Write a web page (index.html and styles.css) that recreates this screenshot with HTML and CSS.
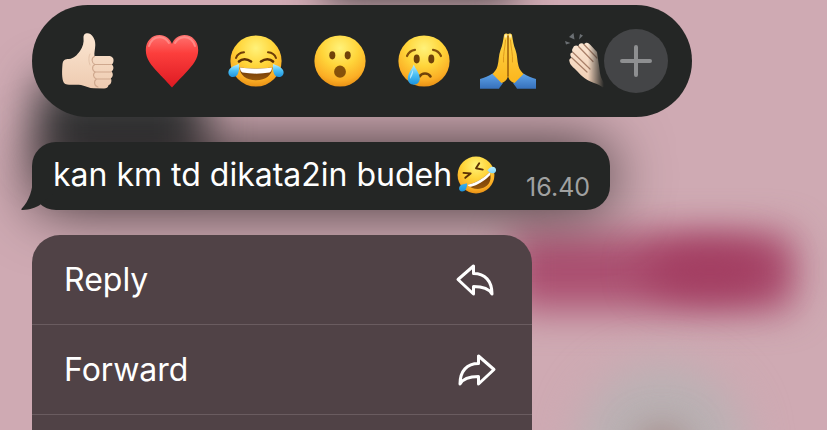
FILE: index.html
```
<!DOCTYPE html>
<html lang="id">
<head>
  <meta charset="UTF-8" />
  <meta name="viewport" content="width=device-width, initial-scale=1.0" />
  <title>Chat</title>
  <link rel="stylesheet" href="styles.css">
</head>
<body>
  <!-- blurred chat behind the menu -->
  <svg class="backdrop" viewBox="0 0 827 430" preserveAspectRatio="xMinYMin slice" aria-hidden="true">
    <defs>
      <filter id="blur" x="-80%" y="-100%" width="260%" height="300%" color-interpolation-filters="sRGB"><feGaussianBlur stdDeviation="22" /></filter>
      <filter id="blurSmall" x="-80%" y="-200%" width="260%" height="500%" color-interpolation-filters="sRGB"><feGaussianBlur stdDeviation="19" /></filter>
    </defs>
    <rect x="325" y="-40" width="190" height="40" fill="#3d3a3b" filter="url(#blurSmall)" />
    <rect x="36" y="76" width="170" height="90" rx="20" fill="#3a3b3c" filter="url(#blur)" />
    <rect x="510" y="234" width="284" height="76" rx="12" fill="#ab4f70" filter="url(#blurSmall)" />
    <ellipse cx="710" cy="270" rx="68" ry="26" fill="#a23c60" filter="url(#blurSmall)" />
    <circle cx="662" cy="448" r="84" fill="#b9b2b4" filter="url(#blur)" />
    <circle cx="662" cy="452" r="24" fill="#a0807c" filter="url(#blurSmall)" />
  </svg>

  <!-- gradients shared by the emoji -->
  <svg class="defs" aria-hidden="true">
    <defs>
      <radialGradient id="face" cx="50%" cy="25%" r="78%">
        <stop offset="0" stop-color="#fff27a" />
        <stop offset=".45" stop-color="#ffd53a" />
        <stop offset=".8" stop-color="#fbae25" />
        <stop offset="1" stop-color="#e48a12" />
      </radialGradient>
      <linearGradient id="tear" x1="0" y1="0" x2="0" y2="1">
        <stop offset="0" stop-color="#b9eeff" />
        <stop offset=".5" stop-color="#4cc0f5" />
        <stop offset="1" stop-color="#1c92dd" />
      </linearGradient>
      <linearGradient id="heart" x1="0" y1="0" x2="0" y2="1">
        <stop offset="0" stop-color="#ff7370" />
        <stop offset=".35" stop-color="#fc3e3c" />
        <stop offset="1" stop-color="#dd1a22" />
      </linearGradient>
      <linearGradient id="skin" x1="0" y1="0" x2="0" y2="1">
        <stop offset="0" stop-color="#fbe6d2" />
        <stop offset="1" stop-color="#eecbb1" />
      </linearGradient>
      <linearGradient id="hands" x1="0" y1="0" x2="0" y2="1">
        <stop offset="0" stop-color="#ffd64b" />
        <stop offset="1" stop-color="#fbb51c" />
      </linearGradient>
      <linearGradient id="sleeve" x1="0" y1="0" x2="0" y2="1">
        <stop offset="0" stop-color="#5fa4ea" />
        <stop offset="1" stop-color="#3670bb" />
      </linearGradient>
      <linearGradient id="mouth" x1="0" y1="0" x2="0" y2="1">
        <stop offset="0" stop-color="#6b3506" />
        <stop offset="1" stop-color="#94560d" />
      </linearGradient>
    </defs>
  </svg>

  <main class="overlay">
    <div class="reactions">
      <div class="emoji-list">
        <button class="emoji" aria-label="Thumbs up">
          <svg viewBox="0 0 56 56">
            <path fill="url(#skin)" d="M2.500 31C3 27 5 26 9 26C14 25.500 17 22 20 18C23 14 24 9 23.500 5C23.400 1.500 25 .3 27.500.3C32 .5 35.500 6 35.300 12C35.200 16 34 20 34.500 23L48 23C52 23 54 25 53.500 28C53.300 30 52.700 31 51.800 31.500C54 33 54 37 51.500 38.500C53.500 40.500 53.200 44 50.800 45.300C52.200 48 51 51.500 48.500 52.300C48 54.500 46.500 55.500 44 55.500L34 55.300C29 55.200 26 53 21 52C15 51 7 53 4 50C1.500 46 2 37 2.500 31Z" />
            <path fill="none" stroke="#cfa88e" stroke-width="1.100" stroke-linecap="round" d="M34.500 23.500C31 25 31.500 30 35 31.500H51.500M35 31.500C31.500 33 32 38 35.500 39H51M35.500 39C32.500 40.500 33 45 36.500 46H50.500M36.500 46C33.500 48 34 53 38 54" />
            <path fill="none" stroke="#e4c3aa" stroke-width="1" stroke-linecap="round" d="M30 21C28 25 29 29 30 32" />
          </svg>
        </button>
        <button class="emoji" aria-label="Love">
          <svg viewBox="0 0 56 56">
            <path fill="url(#heart)" d="M28 54.500C25 51 21 47 14 39.500C7 32 1.800 26 1.800 17C1.800 8 8 2 15.500 2C21.500 2 26 5.500 28 11C30 5.500 34.500 2 40.500 2C48 2 54.200 8 54.200 17C54.200 26 49 32 42 39.500C35 47 31 51 28 54.500Z" />
            <path fill="none" stroke="#ff9a96" stroke-width="2" stroke-linecap="round" opacity=".7" d="M5 13C7 7 11 4 16 4.200C20 4.500 23 6.500 25 10M31 10C33 6.500 36 4.500 40 4.200C45 4 49 7 51 13" />
          </svg>
        </button>
        <button class="emoji" aria-label="Tears of joy">
          <svg viewBox="0 0 56 56">
            <circle cx="28" cy="28" r="25.600" fill="url(#face)" />
            <path fill="none" stroke="#6d3c08" stroke-width="2" stroke-linecap="round" d="M8 25C9 22 12 19.500 16 19.200M48 25C47 22 44 19.500 40 19.200" />
            <path fill="none" stroke="#5d3004" stroke-width="2.600" stroke-linecap="round" d="M11 28.500C14 25.500 19 25.500 23 28.500M33 28.500C37 25.500 42 25.500 45 28.500" />
            <path fill="url(#mouth)" d="M11.500 34.500C22 36 34 36 44.500 34.500C44 42 38 47.300 28 47.300C18 47.300 12 42 11.500 34.500Z" />
            <path fill="#fff" d="M12 34.500C22 36 34 36 44 34.500C44 37 43 39 41.500 39.500C33 41 23 41 14.500 39.500C13 39 12 37 12 34.500Z" />
            <path fill="url(#tear)" d="M11 31C11.500 37 10.500 44 5 44C1.500 44-.5 40.500.8 37.500C2.200 34 7 32.500 11 31ZM45 31C44.500 37 45.500 44 51 44C54.500 44 56.500 40.500 55.200 37.500C53.800 34 49 32.500 45 31Z" />
          </svg>
        </button>
        <button class="emoji" aria-label="Surprised">
          <svg viewBox="0 0 56 56">
            <circle cx="28" cy="28" r="25.600" fill="url(#face)" />
            <ellipse cx="20.300" cy="22.300" rx="3" ry="4.100" fill="#6f4109" />
            <ellipse cx="35.700" cy="22.300" rx="3" ry="4.100" fill="#6f4109" />
            <ellipse cx="28" cy="38.700" rx="5.900" ry="6.100" fill="#86510a" />
          </svg>
        </button>
        <button class="emoji" aria-label="Sad">
          <svg viewBox="0 0 56 56">
            <circle cx="28" cy="28" r="25.600" fill="url(#face)" />
            <path fill="none" stroke="#84500c" stroke-width="2.200" stroke-linecap="round" d="M11 23C12.500 19.500 15 17.200 19 16.800M37 16.800C41 17.200 43.500 19.500 45 23" />
            <ellipse cx="20.700" cy="26" rx="3" ry="4.400" fill="#6f4109" />
            <ellipse cx="35.300" cy="26" rx="3" ry="4.400" fill="#6f4109" />
            <path fill="none" stroke="#6f4109" stroke-width="2.600" stroke-linecap="round" d="M23.500 43.500C26 39.500 32 39.500 34.500 43.500" />
            <path fill="url(#tear)" d="M17.800 31.500C19.500 36 23.800 40.500 23.800 45.500C23.800 49.200 21.200 51.700 17.800 51.700C14.400 51.700 11.800 49.200 11.800 45.500C11.800 40.500 16 36 17.800 31.500Z" />
            <path fill="#e0f7ff" opacity=".7" d="M17 37C15 41 13.500 43 14 46C15.500 44 17.500 41 17 37Z" />
          </svg>
        </button>
        <button class="emoji" aria-label="Thanks">
          <svg viewBox="0 0 56 56">
            <path fill="url(#sleeve)" d="M0 46C4 45 9 43 12.500 40.500L23 50C21 53 19.500 54.500 19 55.700H0ZM56 46C52 45 47 43 43.500 40.500L33 50C35 53 36.500 54.500 37 55.700H56Z" />
            <path fill="url(#hands)" d="M28 1.500C27.500 0 24.500 0 24 2C23 8 22.500 12 20.500 17C18.500 22 19 28 17.500 33C16.500 37 14 39 12.500 41L21.500 50C25 49 28 46 28 42C28 46 31 49 34.500 50L43.500 41C42 39 39.500 37 38.500 33C37 28 37.500 22 35.500 17C33.500 12 33 8 32 2C31.500 0 28.500 0 28 1.500Z" />
            <path fill="none" stroke="#9b5e0a" stroke-width="1.500" stroke-linecap="round" d="M28 3V43" />
            <path fill="none" stroke="#e09b1b" stroke-width="1" stroke-linecap="round" d="M25.500 7C25 16 23 21 23.500 29M30.500 7C31 16 33 21 32.500 29" />
            <path fill="#fff0b8" d="M25 1.500h1.800v3H24.600ZM29.200 1.500H31l.4 3h-2.200Z" />
          </svg>
        </button>
        <button class="emoji" aria-label="Clap">
          <svg viewBox="0 0 56 56">
            <path fill="#6b6f73" d="M1 8L6.500 10L2 11.500ZM5 4L9.500 0L10.500 6.500ZM15 6.500L16 1L19 2.500Z" />
            <path fill="url(#skin)" d="M9 15C10 12 13 12 14.500 13.500C14.500 10 18.500 9.500 20 11.500C21.500 8.500 25 9.500 26.500 12L33 19L35.500 36C36 43 38 48 42 52L39 54.500C36 52 33 51 30 50C24 48 17 43 13 38C9 34 6 32 5.500 28.500C4.500 26.500 6.500 24.500 8 25C5 22 6.500 19 9 19.500C7.500 18 8 16 9 15Z" />
            <path fill="none" stroke="#a87f68" stroke-width="1.200" stroke-linecap="round" d="M14.500 13.500L29 28.500M20 11.500L33 25M9 19.500L26 36M8 25L23 39" />
          </svg>
        </button>
      </div>
      <button class="more" aria-label="More reactions">
        <svg viewBox="0 0 64 64">
          <path d="M32 18V46M18 32H46" />
        </svg>
      </button>
    </div>

    <div class="message">
      <svg class="tail" viewBox="0 0 40 40" aria-hidden="true">
        <path d="M12 0V6C12 20 8 31 .8 38.500C0 39.500.3 40.200 1.500 40C9 39.500 15 38 20 34L32 24V0Z" />
      </svg>
      <p class="text">kan km td dikata2in budeh<svg class="rofl" viewBox="0 0 56 56" role="img" aria-label="Rolling on the floor laughing">
          <circle cx="28" cy="28" r="25.800" fill="url(#face)" />
          <path fill="none" stroke="#5d3004" stroke-width="2.700" stroke-linecap="round" stroke-linejoin="round" d="M10.500 25L20.500 26L13 32M32.500 11.500L28 18.500L37.500 20.500" />
          <path fill="url(#mouth)" d="M16 41.500C28 39 38 33 47 24C50 31 48.500 40 41 44.500C33 49.500 22 48 16 41.500Z" />
          <path fill="#fff" d="M16 41.500C28 39 38 33 47 24C48.500 27 48 28 46.500 29.500C39 37 30 42.500 21 44.500C19 44.500 17 43.500 16 41.500Z" />
          <path fill="url(#tear)" d="M15.500 39.500C15.800 45 13.500 51 8.500 51C4.500 51 3 46.500 5.500 43.500C8 40.500 12 40.500 15.500 39.500ZM44 22C46 17.500 51 14.500 54.500 17.500C57.500 20.500 56 25 52 25.500C48.500 26 46.500 23.500 44 22Z" />
        </svg></p>
      <time class="time">16.40</time>
    </div>

    <ul class="menu">
      <li>
        <button class="menu-item">
          Reply
          <svg class="icon" viewBox="0 0 40 40">
            <path d="M3 19.500L18.500 6V13.500C30 13.500 37 21 37 34C34 28.500 28.500 26.500 18.500 26.500V34Z" />
          </svg>
        </button>
      </li>
      <li>
        <button class="menu-item">
          Forward
          <svg class="icon" viewBox="0 0 40 40">
            <path d="M39 19.500L23.500 6V13.500C12 13.500 5 21 5 34C8 28.500 13.500 26.500 23.500 26.500V34Z" />
          </svg>
        </button>
      </li>
      <li class="menu-rest"></li>
    </ul>
  </main>
</body>
</html>
```
FILE: styles.css
```
* {
  box-sizing: border-box;
}
body {
  margin: 0;
  height: 100vh;
  overflow: hidden;
  position: relative;
  background: #cfaab3;
  font-family: Inter, "Liberation Sans", sans-serif;
  color: #fff;
}
button {
  border: 0;
  padding: 0;
  background: none;
  color: inherit;
  font: inherit;
  cursor: pointer;
}
svg {
  display: block;
}
.backdrop {
  position: absolute;
  inset: 0;
  width: 100%;
  height: 100%;
}
.defs {
  position: absolute;
  width: 0;
  height: 0;
}
.overlay {
  position: relative;
  height: 100%;
  display: flex;
  flex-direction: column;
  align-items: flex-start;
  padding: 5px 32px 0;
}

/* reaction bar */
.reactions {
  position: relative;
  z-index: 1;
  display: flex;
  align-items: center;
  flex-shrink: 0;
  width: 660px;
  max-width: 100%;
  padding: 24px 24px 24px 28px;
  border-radius: 56px;
  background: #242625;
}
.emoji-list {
  flex: 1;
  min-width: 0;
  display: flex;
  gap: 28px;
  overflow: hidden;
  -webkit-mask-image: linear-gradient(to left, transparent, #000 16px);
  mask-image: linear-gradient(to left, transparent, #000 16px);
}
.emoji {
  flex: 0 0 56px;
  height: 56px;
}
.more {
  flex: 0 0 64px;
  height: 64px;
  border-radius: 50%;
  background: #444547;
}
.more path {
  fill: none;
  stroke: #8e8f91;
  stroke-width: 4;
  stroke-linecap: round;
}

/* message bubble */
.message {
  position: relative;
  display: flex;
  flex-shrink: 0;
  gap: 30px;
  margin: 25px 0;
  padding: 7px 20px 9px 21px;
  border-radius: 24px;
  background: #242625;
  box-shadow: 0 0 60px rgba(0, 0, 0, 0.7);
}
.tail {
  position: absolute;
  left: -11px;
  bottom: 0;
  width: 40px;
  height: 40px;
  fill: #242625;
}
.text {
  position: relative;
  display: flex;
  align-items: center;
  margin: 0;
  font-size: 32px;
  line-height: 52px;
  white-space: nowrap;
}
.rofl {
  width: 40px;
  height: 40px;
  margin-left: 4px;
}
.time {
  align-self: flex-end;
  font-size: 25px;
  line-height: 28px;
  color: #a0a1a1;
}

/* context menu */
.menu {
  position: relative;
  display: flex;
  flex-direction: column;
  flex: 1;
  width: 500px;
  max-width: 100%;
  margin: 0;
  padding: 0;
  list-style: none;
  border-radius: 28px 28px 0 0;
  overflow: hidden;
  background: #504246;
}
.menu li + li {
  border-top: 1px solid #6a5c60;
}
.menu-item {
  display: flex;
  justify-content: space-between;
  align-items: center;
  width: 100%;
  padding: 0 37px 0 32px;
  font-size: 32px;
  line-height: 89px;
}
.icon {
  width: 40px;
  height: 40px;
  overflow: visible;
  fill: none;
  stroke: #fff;
  stroke-width: 3;
  stroke-linejoin: round;
}
.menu-rest {
  flex: 1;
}
```
